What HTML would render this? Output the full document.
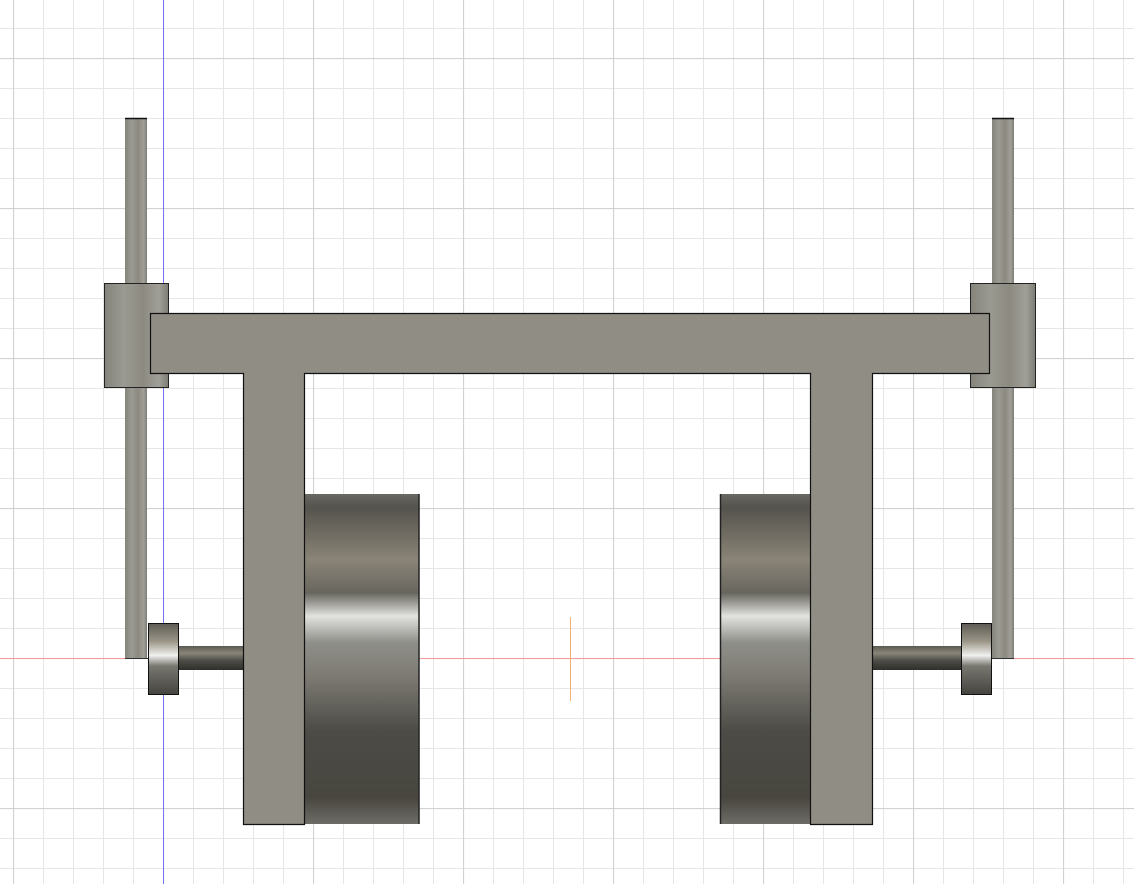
<!DOCTYPE html>
<html><head><meta charset="utf-8"><style>
html,body{margin:0;padding:0;background:#fff;width:1134px;height:884px;overflow:hidden}
svg{display:block}
</style></head><body>
<svg width="1134" height="884" viewBox="0 0 1134 884" xmlns="http://www.w3.org/2000/svg">
<defs>
<pattern id="minor" x="13" y="-2" width="30" height="30" patternUnits="userSpaceOnUse">
<path d="M0.5 0V30M0 0.5H30" stroke="#e6e6e6" stroke-width="1" fill="none"/>
</pattern>
<pattern id="major" x="13" y="58" width="150" height="150" patternUnits="userSpaceOnUse">
<path d="M0.5 0V150M0 0.5H150" stroke="#d2d2d2" stroke-width="1.2" fill="none"/>
</pattern>
<linearGradient id="wheel" x1="0" y1="0" x2="0" y2="1">
<stop offset="0" stop-color="#6a6862"/>
<stop offset="0.04" stop-color="#55534d"/>
<stop offset="0.2" stop-color="#8a8477"/>
<stop offset="0.3" stop-color="#68665f"/>
<stop offset="0.37" stop-color="#e2e2df"/>
<stop offset="0.45" stop-color="#8f8f8a"/>
<stop offset="0.55" stop-color="#7d7b73"/>
<stop offset="0.72" stop-color="#4c4b46"/>
<stop offset="0.92" stop-color="#48463f"/>
<stop offset="1" stop-color="#6e6c66"/>
</linearGradient>
<linearGradient id="rod" x1="0" y1="0" x2="1" y2="0">
<stop offset="0" stop-color="#85847c"/>
<stop offset="0.3" stop-color="#9b9a92"/>
<stop offset="0.6" stop-color="#8c8a80"/>
<stop offset="0.85" stop-color="#a09f98"/>
<stop offset="1" stop-color="#7c7b74"/>
</linearGradient>
<linearGradient id="small" x1="0" y1="0" x2="0" y2="1">
<stop offset="0" stop-color="#5d5b55"/>
<stop offset="0.25" stop-color="#9a9587"/>
<stop offset="0.45" stop-color="#f0f0ee"/>
<stop offset="0.6" stop-color="#77766f"/>
<stop offset="1" stop-color="#45443f"/>
</linearGradient>
<linearGradient id="axle" x1="0" y1="0" x2="0" y2="1">
<stop offset="0" stop-color="#5a5852"/>
<stop offset="0.3" stop-color="#8a8578"/>
<stop offset="0.6" stop-color="#4e4d48"/>
<stop offset="1" stop-color="#2e2e2a"/>
</linearGradient>
</defs>
<rect width="1134" height="884" fill="#fff"/>
<rect width="1134" height="884" fill="url(#minor)"/>
<rect width="1134" height="884" fill="url(#major)"/>
<rect x="163" y="0" width="1" height="884" fill="#7474f2"/>
<rect x="0" y="658" width="1134" height="1" fill="#f49a9a"/>
<rect x="570" y="617" width="1" height="84" fill="#f0b070"/>

<!-- rods -->
<rect x="125" y="118" width="22" height="540" fill="url(#rod)"/>
<line x1="125" y1="118.5" x2="147" y2="118.5" stroke="#111" stroke-width="1.5"/>
<line x1="125" y1="658.5" x2="148" y2="658.5" stroke="#333" stroke-width="1"/>
<rect x="992" y="118" width="22" height="540" fill="url(#rod)"/>
<line x1="992" y1="118.5" x2="1014" y2="118.5" stroke="#111" stroke-width="1.5"/>
<line x1="991" y1="658.5" x2="1014" y2="658.5" stroke="#333" stroke-width="1"/>

<!-- bushings -->
<rect x="104.5" y="283.5" width="64" height="104" fill="url(#rod)" stroke="#222" stroke-width="1"/>
<rect x="970.5" y="283.5" width="65" height="104" fill="url(#rod)" stroke="#222" stroke-width="1"/>

<!-- axles -->
<rect x="178" y="646" width="65" height="24" fill="url(#axle)"/>
<rect x="872" y="646" width="89" height="24" fill="url(#axle)"/>

<!-- small wheels -->
<rect x="148.5" y="623.5" width="30" height="71" fill="url(#small)" stroke="#111" stroke-width="1"/>
<rect x="961.5" y="623.5" width="30" height="71" fill="url(#small)" stroke="#111" stroke-width="1"/>

<!-- big wheels -->
<rect x="304" y="494" width="115" height="330" fill="url(#wheel)"/>
<line x1="419" y1="494" x2="419" y2="824" stroke="#222" stroke-width="1.5"/>
<rect x="720" y="494" width="90" height="330" fill="url(#wheel)"/>
<line x1="720.5" y1="494" x2="720.5" y2="824" stroke="#222" stroke-width="1.5"/>

<!-- frame -->
<path d="M150.5 313.5H989.5V373.5H872.5V824.5H810.5V373.5H304.5V824.5H243.5V373.5H150.5Z" fill="#8f8d84" stroke="#111" stroke-width="1.2"/>
</svg>
</body></html>
